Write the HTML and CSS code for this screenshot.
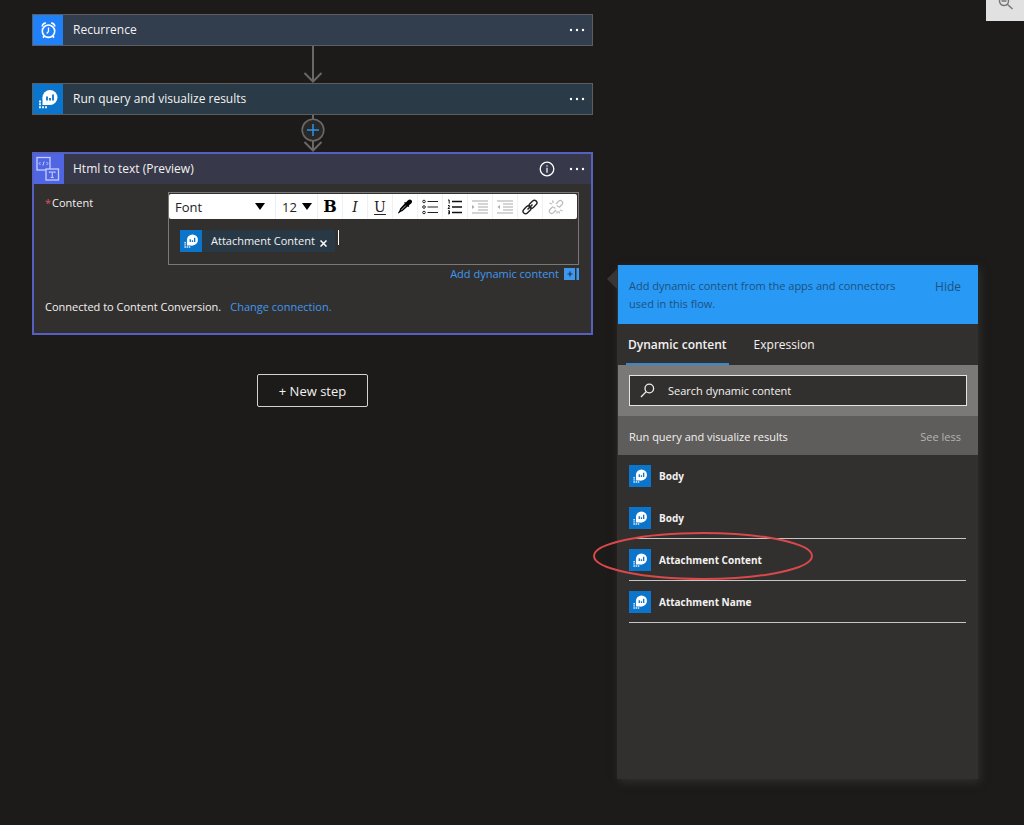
FILE: index.html
```
<!DOCTYPE html>
<html lang="en">
<head>
<meta charset="utf-8">
<title>Flow designer</title>
<link rel="stylesheet" href="styles.css">
</head>
<body>
<svg class="defs" aria-hidden="true">
  <symbol id="monitor-logs" viewBox="0 0 30 30">
    <circle cx="17" cy="13.500" r="7.500" fill="#fff"/>
    <path d="M9.500 13v8h8z" fill="#fff"/>
    <path d="M14 12.500v4M17 14v2.500M20 10.500v6" stroke="#0b74cb" stroke-width="1.800"/>
    <path d="M6 16.500h2v2H6zM6 19.300h2v2H6zM6 22.200h2v2H6zM9 22.200h2v2H9zM12 22.200h2v2h-2z" fill="#e4f2ff"/>
  </symbol>
  <symbol id="dots" viewBox="0 0 16 4"><circle cx="2" cy="2" r="1.200"/><circle cx="8" cy="2" r="1.200"/><circle cx="14" cy="2" r="1.200"/></symbol>
</svg>

<div class="designer">
  <main class="flow">
    <section class="card card-recurrence">
      <header class="card-head">
        <span class="tile tile-clock">
          <svg viewBox="0 0 30 30" width="30" height="30" fill="none" stroke="#fff"><circle cx="15.500" cy="16.200" r="6.200" stroke-width="1.600"/><path d="M15.500 12.500v4l-1.800 2" stroke-width="1.300"/><path d="M9.200 11.500a3.300 3.300 0 0 1 3.600-3.300M21.800 11.500a3.300 3.300 0 0 0-3.600-3.300M11.300 21l-1.300 1.600M19.700 21l1.300 1.600" stroke-width="1.700"/></svg>
        </span>
        <h2 class="card-title">Recurrence</h2>
        <button class="icon-btn" aria-label="More"><svg width="16" height="4"><use href="#dots"/></svg></button>
      </header>
    </section>

    <svg class="arrow" width="24" height="37" viewBox="0 0 24 37" fill="none" stroke="#696866" stroke-width="2"><path d="M12 0v35M3.500 27l8.500 8.500 8.500-8.500"/></svg>

    <section class="card card-query">
      <header class="card-head">
        <span class="tile tile-logs"><svg width="30" height="30"><use href="#monitor-logs"/></svg></span>
        <h2 class="card-title">Run query and visualize results</h2>
        <button class="icon-btn" aria-label="More"><svg width="16" height="4"><use href="#dots"/></svg></button>
      </header>
    </section>

    <button class="insert" aria-label="Insert a new step">
      <svg width="24" height="37" viewBox="0 0 24 37" fill="none" stroke="#696866" stroke-width="2"><path d="M12 0v35M3.500 27l8.500 8.500 8.500-8.500"/><circle cx="12" cy="15" r="10.800" fill="#292827" stroke-width="1.600"/><path d="M12 9v12M6 15h12" stroke="#2d93e8" stroke-width="1.500"/></svg>
    </button>

    <section class="card card-html">
      <header class="card-head">
        <span class="tile tile-html">
          <svg viewBox="0 0 30 30" width="30" height="30" fill="none" stroke="#c3ceff"><rect x="3" y="3.500" width="13" height="12.500" stroke-width="1.300"/><path d="M6.500 8L5 9.500 6.500 11M10.100 7.500l-1.200 4M12.500 8L14 9.500 12.500 11" stroke-width="1"/><rect x="12" y="15" width="12.500" height="11" fill="#5065e3" stroke-width="1.300"/><path d="M15.500 19v-1H21v1M18.250 18v5.500M16.700 23.500h3" stroke-width="1.100"/></svg>
        </span>
        <h2 class="card-title">Html to text (Preview)</h2>
        <button class="icon-btn" aria-label="Information"><svg width="16" height="16" viewBox="0 0 16 16"><circle cx="8" cy="8" r="6.800" fill="none" stroke="#fff" stroke-width="1.300"/><path d="M7.400 6.800h1.200v5H7.400zM7.400 4.200h1.200v1.300H7.400z"/></svg></button>
        <button class="icon-btn" aria-label="More"><svg width="16" height="4"><use href="#dots"/></svg></button>
      </header>
      <div class="card-body">
        <div class="field">
          <span class="field-label" id="content-label"><span class="required">*</span>Content</span>
          <div class="field-control">
            <div class="editor">
              <div class="toolbar" role="toolbar" aria-label="Formatting">
                <span class="pick pick-font"><select aria-label="Font"><option>Font</option></select><svg width="10" height="7"><path d="M0 0h10L5 7z"/></svg></span>
                <span class="pick pick-size"><select aria-label="Font size"><option>12</option></select><svg width="10" height="7"><path d="M0 0h10L5 7z"/></svg></span>
                <button class="tool tool-bold" aria-label="Bold">B</button>
                <button class="tool tool-italic" aria-label="Italic">I</button>
                <button class="tool tool-underline" aria-label="Underline">U</button>
                <button class="tool" aria-label="Text color"><svg width="16" height="16" viewBox="0 0 16 16"><path d="M14.500 1.200c1 1 .6 2.300-.4 3.200l-2.300 2.200.5.600-.9.900-.8-.7-5 4.600-1.800.7-2.300 1.900-.6-.7 1.600-2.300.6-2 4.700-5-.7-.8.900-.9.800.6 2.200-2.300c1-1 2.500-1 3.500 0z"/><path d="M8.800 6.500l-4.500 4.600" stroke="#fff" stroke-width=".7"/></svg></button>
                <button class="tool" aria-label="Bulleted list"><svg width="16" height="16" viewBox="0 0 16 16" fill="none" stroke="#222"><circle cx="2" cy="2.500" r="1.300"/><circle cx="2" cy="8" r="1.300"/><circle cx="2" cy="13.500" r="1.300"/><path d="M5.500 2.500H16M5.500 8H16M5.500 13.500H16" stroke-width="1.200"/></svg></button>
                <button class="tool" aria-label="Numbered list"><svg width="16" height="16" viewBox="0 0 16 16" fill="none" stroke="#111"><path d="M5 2.500h10M5 8h10M5 13.500h10" stroke-width="1.700"/><path d="M1 1h1.200v3.500M1 6.500h1.300v1.500L1 9.500h1.800M1 11.800h1.500v3H1M1.200 13.300h1.300"/></svg></button>
                <button class="tool" aria-label="Indent"><svg width="16" height="16" viewBox="0 0 16 16" fill="none" stroke="#aaa" stroke-width="1.200"><path d="M0 2h16M6 5h10M6 8h10M6 11h10M0 14h16"/><path d="M0 6l2.500 2L0 10z" fill="#aaa" stroke="none"/></svg></button>
                <button class="tool" aria-label="Outdent"><svg width="16" height="16" viewBox="0 0 16 16" fill="none" stroke="#aaa" stroke-width="1.200"><path d="M0 2h16M6 5h10M6 8h10M6 11h10M0 14h16"/><path d="M3 6L.5 8 3 10z" fill="#aaa" stroke="none"/></svg></button>
                <button class="tool" aria-label="Insert link"><svg width="16" height="16" viewBox="0 0 16 16" fill="none" stroke="#222" stroke-width="1.400"><rect x="6.500" y="2.700" width="9" height="5" rx="2.500" transform="rotate(-45 11 5.200)"/><rect x=".5" y="8.300" width="9" height="5" rx="2.500" transform="rotate(-45 5 10.800)"/><path d="M5.500 10.500l5-5"/></svg></button>
                <button class="tool" aria-label="Remove link"><svg width="16" height="16" viewBox="0 0 16 16" fill="none" stroke="#bbb" stroke-width="1.200"><path d="M8 5l2.500-2.700a2.300 2.300 0 0 1 3.500 3.200L11 8.500M9 6.500l1.500 1.500M8 11l-2.500 2.700A2.300 2.300 0 0 1 2 10.500L5 7.500M5.500 8l1.800 1.500M4.500 1.500l.8 2.500M1.500 4l2.500 1M11.500 14.500l-.8-2.500M14.500 12L12 11M9 12v2.500"/></svg></button>
              </div>
              <div class="text-area" role="textbox" aria-labelledby="content-label">
                <span class="token"><svg class="logs" width="22" height="22"><use href="#monitor-logs"/></svg><span class="token-name">Attachment Content</span><button class="token-x" aria-label="Remove"><svg width="7" height="7" viewBox="0 0 7 7"><path d="M.5.5l6 6M6.500.5l-6 6" stroke="#fff" stroke-width="1.500"/></svg></button></span><span class="caret"></span>
              </div>
            </div>
            <a class="add-dynamic" href="#dynamic">Add dynamic content
              <svg width="15" height="12" viewBox="0 0 15 12"><path d="M0 0h11v12H0zM12.500 0H15v12h-2.500z" fill="#3f98ef"/><path d="M6 3.500v5M3.500 6h5" stroke="#17365c" stroke-width="1.200"/></svg></a>
          </div>
        </div>
        <p class="connection">Connected to Content Conversion.<a href="#connection">Change connection.</a></p>
      </div>
    </section>

    <button class="new-step">+ New step</button>
  </main>

  <aside class="panel" id="dynamic">
    <header class="panel-head">
      <p>Add dynamic content from the apps and connectors used in this flow.</p>
      <button class="hide">Hide</button>
    </header>
    <nav class="tabs" role="tablist">
      <button class="tab tab-active" role="tab" aria-selected="true">Dynamic content</button>
      <button class="tab" role="tab" aria-selected="false">Expression</button>
    </nav>
    <div class="search">
      <label class="search-box">
        <svg width="15" height="15" viewBox="0 0 15 15" fill="none" stroke="#eee" stroke-width="1.300"><circle cx="9.300" cy="5.500" r="4.300"/><path d="M6.200 8.600L1 14"/></svg>
        <input type="text" placeholder="Search dynamic content" aria-label="Search dynamic content">
      </label>
    </div>
    <div class="group"><h3>Run query and visualize results</h3><button class="see-less">See less</button></div>
    <ul class="outputs">
      <li class="output output-first"><svg class="logs" width="22" height="22"><use href="#monitor-logs"/></svg>Body</li>
      <li class="output"><svg class="logs" width="22" height="22"><use href="#monitor-logs"/></svg>Body</li>
      <li class="output output-marked"><svg class="logs" width="22" height="22"><use href="#monitor-logs"/></svg>Attachment Content
        <svg class="marker" width="222" height="50" viewBox="0 0 222 50" fill="none" stroke="#d9484b" stroke-width="2"><ellipse cx="111" cy="25" rx="109" ry="23"/></svg></li>
      <li class="output"><svg class="logs" width="22" height="22"><use href="#monitor-logs"/></svg>Attachment Name</li>
    </ul>
  </aside>
</div>

<button class="zoom" aria-label="Zoom"><svg width="20" height="20" viewBox="0 0 20 20" fill="none" stroke="#777" stroke-width="1.500"><circle cx="8" cy="8" r="4.500"/><path d="M11 11l5.500 5M5.500 8h5"/></svg></button>
</body>
</html>
```
FILE: styles.css
```
* { box-sizing: border-box; }
body {
  margin: 0;
  min-height: 100vh;
  background: #1c1b19;
  color: #f3f2f1;
  font: 12px/18px "Open Sans", "Noto Sans", sans-serif;
}
h2, h3, p, ul { margin: 0; padding: 0; font-weight: 400; }
button { padding: 0; border: 0; background: none; color: inherit; font: inherit; cursor: pointer; }
svg { display: block; flex: none; }
a { color: #3f98ef; text-decoration: none; }
.defs { position: absolute; width: 0; height: 0; }

.designer {
  display: grid;
  grid-template-columns: minmax(0, 561fr) minmax(0, 361fr);
  gap: 24px;
  padding: 14px 46px 46px 32px;
  align-items: start;
}
.flow { display: flex; flex-direction: column; align-items: center; }

.card { width: 100%; border: 1px solid #5c5d5e; }
.card-head { display: flex; align-items: center; height: 30px; padding-right: 7px; }
.card-recurrence { background: #323d4e; }
.card-query { background: #2a3a47; }
.card-html { border: 2px solid #5560c0; background: #32302f; }
.card-html .card-head { background: #373849; padding-right: 6px; }
.tile { width: 30px; height: 30px; }
.tile-clock { background: #1f80f8; }
.tile-logs { background: #0b74cb; }
.tile-html { background: #5065e3; }
.card-title { flex: 1; padding-left: 10px; font-size: 12px; line-height: 20px; }
.card-html .card-title { padding-left: 9px; }
.icon-btn { display: grid; place-items: center; width: 16px; height: 20px; margin-left: 14px; fill: #fff; }
.insert { height: 37px; }

.card-body { padding: 8px 12px 17px 11px; }
.field { display: flex; align-items: flex-start; }
.field-label { width: 123px; padding-top: 2px; font-size: 11px; }
.required { margin-right: 1px; color: #e0505a; }
.field-control { flex: 1; display: flex; flex-direction: column; }
.editor { border: 1px solid #7b7977; }
.toolbar { display: flex; height: 25px; margin: 1px 1px 0 0; border-radius: 2px; background: #fff; color: #222; }
.pick { display: flex; align-items: center; border-right: 1px solid #eee; }
.pick select { flex: 1; min-width: 0; appearance: none; border: 0; padding: 0; background: none; color: #222; font: 13px/20px "Open Sans", sans-serif; }
.pick-font { width: 107px; padding: 0 10px 0 6px; }
.pick-size { width: 42px; padding: 0 5px 0 6px; }
.tool { display: grid; place-items: center; width: 25px; border-right: 1px solid #f1f1f1; font: 14px/20px "DejaVu Serif", serif; }
.tool:last-child { border: 0; }
.tool-bold { font-weight: 700; font-size: 16px; color: #000; }
.tool-italic { font-style: italic; }
.tool-underline { text-decoration: underline; text-underline-offset: 2px; }
.text-area { display: flex; align-items: flex-start; height: 45px; padding: 11px 11px; }
.logs { background: #0b74cb; }
.token { display: flex; align-items: center; height: 22px; background: #293845; font-size: 11px; }
.token-name { padding-left: 9px; }
.token-x { padding: 5px 8px 0 5px; }
.caret { width: 1px; height: 15px; margin-left: 3px; background: #fff; }
.add-dynamic { display: flex; align-items: center; align-self: flex-end; gap: 5px; font-size: 11px; }
.connection { display: flex; gap: 9px; padding-top: 15px; font-size: 11px; }

.new-step { width: 111px; height: 33px; margin-top: 39px; border: 1px solid #d4d3d1; border-radius: 2px; font-size: 13px; }

.panel {
  position: relative;
  min-height: 514px;
  margin-top: 251px;
  background: #32302f;
  box-shadow: 2px 3px 8px #302f2d;
}
.panel::before {
  content: "";
  position: absolute;
  left: -10px;
  top: 4px;
  border: 10px solid transparent;
  border-left: 0;
  border-right-color: #383634;
}
.panel-head { display: flex; align-items: flex-start; justify-content: space-between; margin-left: 1px; padding: 12px 17px 11px 11px; background: #2899f5; color: #1d527f; }
.panel-head p { flex: 0 1 290px; font-size: 11px; }
.hide { padding-top: 1px; }
.tabs { display: flex; gap: 23px; height: 41px; padding-left: 9px; }
.tab { padding: 3px 2px 0; border-bottom: 2px solid transparent; }
.tab-active { border-color: #3689cc; font-weight: 600; }
.search { margin-left: 1px; padding: 10px 11px; background: #7a7977; }
.search-box { display: flex; align-items: center; height: 31px; padding: 0 10px; border: 1px solid #e5e4e2; background: #32302f; }
.search-box input { flex: 1; min-width: 0; margin-left: 13px; padding: 0; border: 0; outline: 0; background: none; color: #f3f2f1; font: inherit; font-size: 11px; }
.search-box input::placeholder { color: #f3f2f1; opacity: 1; }
.group { display: flex; align-items: center; justify-content: space-between; height: 39px; margin-left: 1px; padding: 2px 17px 0 11px; background: #5f5d5b; font-size: 11px; }
.group h3 { font-size: 11px; }
.see-less { color: #b5b3b1; }
.outputs { padding: 0 12px; list-style: none; }
.output { display: flex; align-items: center; gap: 8px; height: 42px; border-bottom: 1px solid #c8c6c4; font-size: 10px; font-weight: 700; }
.output-first { border-color: transparent; }
.output-marked { position: relative; }
.marker { position: absolute; left: -37px; top: -8px; }

.zoom { position: absolute; right: 0; top: 0; width: 38px; height: 21px; padding-left: 10px; overflow: hidden; background: #e1e1e1; }
.zoom svg { margin-top: -16px; }
```
